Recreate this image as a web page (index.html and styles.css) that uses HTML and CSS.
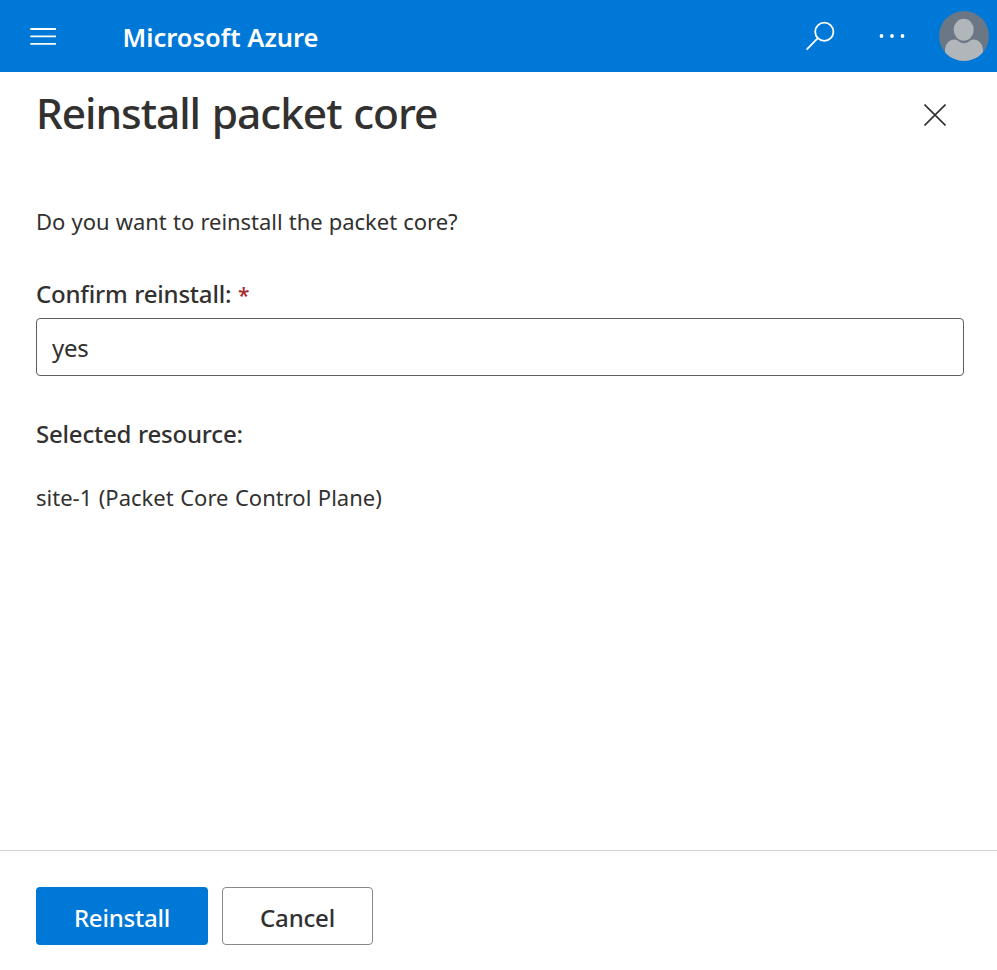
FILE: index.html
```html
<!DOCTYPE html>
<html lang="en">
<head>
<meta charset="utf-8">
<title>Reinstall packet core - Microsoft Azure</title>
<link rel="stylesheet" href="styles.css">
</head>
<body>
<header class="topbar">
  <button class="icon-button menu" aria-label="Menu">
    <svg width="26" height="18" viewBox="0 0 26 18" stroke="#fff" stroke-width="1.8"><path d="M.3 2H26M.3 9.4H26M.3 16.8H26"/></svg>
  </button>
  <span class="brand">Microsoft Azure</span>
  <button class="icon-button search" aria-label="Search">
    <svg width="30" height="30" viewBox="0 0 30 30" fill="none" stroke="#fff" stroke-width="1.8"><circle cx="19.3" cy="10.7" r="9.1"/><path d="M12.8 17.2L1.6 28.6"/></svg>
  </button>
  <button class="icon-button more" aria-label="More">
    <svg width="26" height="6" viewBox="0 0 26 6" fill="#fff"><circle cx="2.5" cy="3" r="1.9"/><circle cx="13" cy="3" r="1.9"/><circle cx="23.5" cy="3" r="1.9"/></svg>
  </button>
  <svg class="avatar" width="50" height="50" viewBox="0 0 50 50">
    <defs><clipPath id="disc"><circle cx="25" cy="25" r="25"/></clipPath></defs>
    <g clip-path="url(#disc)">
      <path fill="#6b7785" d="M0 0H50V50H0z"/>
      <path fill="#b1b6bb" d="M6 50V40C6 33 10 28.5 16 28.5C19 28.5 20 32.2 25 32.2S31 28.5 34 28.5C40 28.5 44 33 44 40V50z"/>
      <ellipse cx="24.7" cy="18.7" rx="10" ry="11" fill="#b1b6bb"/>
    </g>
  </svg>
</header>
<main class="blade">
  <div class="title-row">
    <h1>Reinstall packet core</h1>
    <button class="icon-button close" aria-label="Close">
      <svg width="22" height="22" viewBox="0 0 22 22" stroke="#323130" stroke-width="1.6"><path d="M.5 .5L21.5 21.5M21.5 .5L.5 21.5"/></svg>
    </button>
  </div>
  <p class="question">Do you want to reinstall the packet core?</p>
  <label class="label" for="confirm"><span class="confirm-text">Confirm reinstall:</span> <span class="required">*</span></label>
  <input class="field" id="confirm" type="text" value="yes">
  <h2 class="label selected">Selected resource:</h2>
  <p class="resource">site-1 (Packet Core Control Plane)</p>
</main>
<footer class="actions">
  <button class="button primary">Reinstall</button>
  <button class="button secondary">Cancel</button>
</footer>
</body>
</html>
```
FILE: styles.css
```css
* { box-sizing: border-box; }
body {
  margin: 0;
  height: 970px;
  display: flex;
  flex-direction: column;
  background: #fff;
  color: #323130;
  font-family: "Noto Sans", "Open Sans", sans-serif;
  overflow: hidden;
}
button, input { font-family: inherit; color: inherit; }
h1, h2, p { margin: 0; white-space: nowrap; }
svg { display: block; }
.icon-button { padding: 0; border: 0; background: none; }
.topbar {
  flex: none;
  display: flex;
  align-items: center;
  height: 72px;
  padding: 0 8px 0 30px;
  background: #0078d7;
}
.brand {
  margin: 2px auto 0 66.5px;
  color: #fff;
  font-size: 25.5px;
  font-weight: 600;
  line-height: 36px;
}
.search { margin-right: 44px; }
.more { margin-right: 34px; }
.blade {
  flex: 1;
  display: flex;
  flex-direction: column;
  padding: 0 33px 0 36px;
}
.title-row {
  display: flex;
  align-items: center;
  justify-content: space-between;
  height: 86px;
  padding-right: 18px;
}
h1 {
  margin-top: -4px;
  font-size: 42.5px;
  font-weight: 500;
  line-height: 60px;
  letter-spacing: -1.07px;
  word-spacing: 1.9px;
}
.question {
  margin-top: 47px;
  font-size: 22px;
  line-height: 32px;
  letter-spacing: -0.05px;
  word-spacing: 0.6px;
}
.label {
  margin-top: 41px;
  font-size: 24px;
  font-weight: 500;
  line-height: 32px;
  letter-spacing: -0.2px;
  word-spacing: 0.7px;
}
.required { color: #a4262c; font-size: 21px; line-height: 1; }
.field {
  height: 58px;
  margin-top: 8px;
  padding: 0 15px;
  border: 1px solid #605e5c;
  border-radius: 4px;
  background: #fff;
  font-size: 24px;
  letter-spacing: -0.3px;
  outline: 0;
}
.selected { margin-top: 42px; }
.resource {
  margin-top: 31px;
  font-size: 22px;
  line-height: 32px;
  word-spacing: 0.8px;
}
.actions {
  flex: none;
  display: flex;
  gap: 14px;
  height: 120px;
  padding: 36px;
  border-top: 1px solid #d2d0ce;
}
.button {
  height: 58px;
  padding: 2px 0 0;
  border-radius: 4px;
  font-size: 24px;
  font-weight: 500;
  letter-spacing: -0.2px;
}
.primary { width: 172px; border: 0; background: #0078d7; color: #fff; }
.secondary { width: 151px; border: 1px solid #8a8886; background: #fff; }
```
